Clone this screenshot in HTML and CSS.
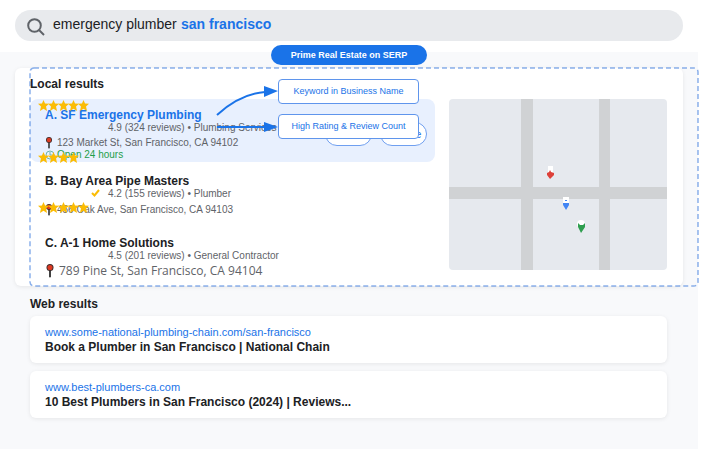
FILE: index.html
```
<!DOCTYPE html>
<html lang="en">
<head>
    <meta charset="UTF-8">
    <meta name="viewport" content="width=device-width, initial-scale=1.0">
    <title>Local search results</title>
    <link rel="stylesheet" href="styles.css">
</head>
<body>
    <svg class="symbols" aria-hidden="true">
        <symbol id="star" viewBox="0 0 10 10">
            <path d="M5 0l1.400 3.200 3.600.3-2.700 2.500.9 3.900L5 7.900 1.800 9.900l.9-3.900L0 3.500l3.600-.3z"/>
        </symbol>
        <symbol id="pushpin" viewBox="0 0 8 12">
            <path d="M3.200 4h1.600v6.500L4 12l-.8-1.500z" fill="#333"/>
            <circle cx="4" cy="3" r="3" fill="#3c2a2a"/>
            <circle cx="4" cy="3" r="2.200" fill="#dd3a22"/>
        </symbol>
    </svg>

    <header class="topbar">
        <form class="searchbar">
            <svg class="search-icon" viewBox="0 0 18 18">
                <circle cx="7.500" cy="7.500" r="6.300"/>
                <path d="M12 12l5 5"/>
            </svg>
            <input class="what" type="text" aria-label="Search" value="emergency plumber">
            <input class="where" type="text" aria-label="City" value="san francisco">
        </form>
    </header>

    <main class="page">
        <div class="prime">
            <span class="prime-badge">Prime Real Estate on SERP</span>
        </div>

        <section class="local">
            <h2>Local results</h2>
            <div class="local-grid">
                <div class="results">
                    <article class="result featured">
                        <h3>A. SF Emergency Plumbing</h3>
                        <p class="meta">4.9 (324 reviews) • Plumbing Services</p>
                        <p class="address"><svg class="pushpin"><use href="#pushpin"/></svg>123 Market St, San Francisco, CA 94102</p>
                        <p class="hours"><svg class="clock" viewBox="0 0 10 10"><circle cx="5" cy="5" r="4"/><path d="M5 2v3h2"/></svg>Open 24 hours</p>
                        <div class="stars">
                            <svg><use href="#star"/></svg><svg><use href="#star"/></svg><svg><use href="#star"/></svg><svg><use href="#star"/></svg><svg><use href="#star"/></svg>
                        </div>
                        <div class="actions">
                            <button type="button">Call</button>
                            <button type="button">Website</button>
                        </div>
                    </article>
                    <article class="result second">
                        <h3>B. Bay Area Pipe Masters</h3>
                        <p class="meta"><svg class="check" viewBox="0 0 9 8"><path d="M1 4l2.500 2.500L8 1"/></svg>4.2 (155 reviews) • Plumber</p>
                        <p class="address"><svg class="pushpin"><use href="#pushpin"/></svg>456 Oak Ave, San Francisco, CA 94103</p>
                        <div class="stars">
                            <svg><use href="#star"/></svg><svg><use href="#star"/></svg><svg><use href="#star"/></svg><svg><use href="#star"/></svg>
                        </div>
                    </article>
                    <article class="result third">
                        <h3>C. A-1 Home Solutions</h3>
                        <p class="meta">4.5 (201 reviews) • General Contractor</p>
                        <p class="address large"><svg class="pushpin"><use href="#pushpin"/></svg>789 Pine St, San Francisco, CA 94104</p>
                        <div class="stars">
                            <svg><use href="#star"/></svg><svg><use href="#star"/></svg><svg><use href="#star"/></svg><svg><use href="#star"/></svg><svg><use href="#star"/></svg>
                        </div>
                    </article>
                </div>
                <svg class="map" viewBox="0 0 218 171" preserveAspectRatio="xMidYMid slice" role="img" aria-label="Map">
                    <rect width="218" height="171" fill="#e6e9ee"/>
                    <path d="M72 0h12v171H72zM150 0h11v171h-11zM0 88h218v12H0z" fill="#d0d2d4"/>
                    <g fill="#fff">
                        <path d="M99 67h5v7h-5z"/>
                        <path d="M114 98h6v7h-6z"/>
                        <circle cx="132" cy="125" r="4"/>
                    </g>
                    <path d="M98 74l2-1 1-2 1 2 3 1v2l-4 4-3-4z" fill="#dd4039"/>
                    <path d="M114 104h6v2l-3 5-3-5zM116 101h2v1h-2z" fill="#4285f4"/>
                    <path d="M129 124l2 2h3l2-2v4l-4 6-3-6z" fill="#2f9e4f"/>
                </svg>
            </div>

            <svg class="zone"><rect x="1" y="1" rx="4"/></svg>
            <svg class="arrows" viewBox="0 0 64 44">
                <path class="line" d="M2 30Q25 9 50 7M2 42H50"/>
                <path class="head" d="M49 1l14 5-14 6zM49 37l14 5-14 5z"/>
            </svg>
            <div class="callouts">
                <span>Keyword in Business Name</span>
                <span>High Rating &amp; Review Count</span>
            </div>
        </section>

        <section class="web">
            <h2>Web results</h2>
            <article class="web-card">
                <a href="#">www.some-national-plumbing-chain.com/san-francisco</a>
                <h3>Book a Plumber in San Francisco | National Chain</h3>
            </article>
            <article class="web-card">
                <a href="#">www.best-plumbers-ca.com</a>
                <h3>10 Best Plumbers in San Francisco (2024) | Reviews...</h3>
            </article>
        </section>
    </main>
</body>
</html>
```
FILE: styles.css
```
* {
    box-sizing: border-box;
}
html {
    height: 100%;
}
body {
    display: flex;
    flex-direction: column;
    min-height: 100%;
    margin: 0;
    padding-right: 18px;
    background-color: #ffffff;
    color: #202124;
    font-family: "Liberation Sans", Arial, sans-serif;
    font-size: 12px;
}
h2, h3, p {
    margin: 0;
}
h2, h3 {
    font-size: 12px;
    line-height: 15px;
}
.symbols {
    position: absolute;
    width: 0;
    height: 0;
}

/* search bar */
.topbar {
    padding: 10px 15px 11px;
}
.searchbar {
    display: flex;
    align-items: center;
    height: 31px;
    padding: 0 12px;
    border-radius: 16px;
    background-color: #e8eaed;
}
.search-icon {
    width: 18px;
    height: 18px;
    margin-top: 2px;
    margin-right: 8px;
    fill: none;
    stroke: #5f6368;
    stroke-width: 2;
}
.searchbar input {
    height: 20px;
    margin-bottom: 4px;
    padding: 0;
    border: none;
    outline: none;
    background: none;
    color: #202124;
    font-family: inherit;
    font-size: 14px;
}
.searchbar .what {
    width: 128px;
}
.searchbar .where {
    flex: 1;
    color: #1a73e8;
    font-weight: bold;
}

.page {
    flex: 1;
    background-color: #f8f9fb;
}
.prime {
    position: relative;
    height: 16px;
}
.prime-badge {
    position: absolute;
    top: -7px;
    left: 50%;
    width: 156px;
    margin-left: -78px;
    border-radius: 10px;
    background-color: #1a73e8;
    color: #ffffff;
    font-size: 9px;
    font-weight: bold;
    line-height: 20px;
    text-align: center;
}

/* local results */
.local {
    position: relative;
    margin: 0 15px;
    padding: 9px 16px 7px 15px;
    border-radius: 6px;
    background-color: #ffffff;
    box-shadow: 0 1px 4px rgba(0, 0, 0, 0.08);
}
.local-grid {
    display: grid;
    grid-template-columns: 13fr 7fr;
    gap: 14px;
    margin-top: 7px;
}
.result {
    position: relative;
    padding: 12px 15px 0;
}
.featured {
    padding-top: 9px;
    padding-bottom: 1px;
    border-radius: 8px;
    background-color: #e8f0fe;
}
.featured h3 {
    color: #1a73e8;
}
.meta {
    position: relative;
    margin-left: 63px;
    color: #5f6368;
    font-size: 10px;
    line-height: 10px;
}
.address, .hours {
    display: flex;
    align-items: center;
    color: #5f6368;
    font-size: 10px;
    line-height: 12px;
}
.address {
    margin-top: 4px;
}
.hours {
    color: #1e9e4a;
}
.second .address {
    margin-top: 5px;
    margin-bottom: 8px;
}
.address.large {
    margin-top: 2px;
    font-family: "Open Sans", sans-serif;
    font-size: 12px;
    line-height: 16px;
}
.pushpin {
    width: 8px;
    height: 12px;
    margin-right: 4px;
}
.large .pushpin {
    width: 10px;
    height: 14px;
}
.clock {
    width: 10px;
    height: 10px;
    margin-right: 2px;
    fill: none;
    stroke: #6fb6b0;
}
.check {
    position: absolute;
    left: -17px;
    width: 9px;
    height: 8px;
    fill: none;
    stroke: #fbbc04;
    stroke-width: 2;
}
.stars {
    position: absolute;
    top: 1px;
    left: 8px;
    display: flex;
    fill: #fbbc04;
}
.second .stars {
    top: -10px;
}
.third .stars {
    top: -22px;
}
.stars svg {
    width: 11px;
    height: 11px;
    margin-right: -1px;
}
.actions {
    position: absolute;
    top: 23px;
    right: 8px;
    display: flex;
    gap: 8px;
}
.actions button {
    width: 47px;
    height: 24px;
    padding: 0;
    border: 1px solid #6f9ff0;
    border-radius: 12px;
    background-color: #ffffff;
    color: #1a73e8;
    font-family: inherit;
    font-size: 10px;
}
.map {
    width: 100%;
    height: 171px;
    border-radius: 4px;
}

/* annotations over the local block */
.zone {
    position: absolute;
    top: -1px;
    left: 14px;
    width: 100%;
    height: calc(100% + 2px);
    overflow: visible;
}
.zone rect {
    width: 100%;
    height: calc(100% - 2px);
    fill: none;
    stroke: #1a63d8;
    stroke-dasharray: 5 3;
    stroke-opacity: 0.5;
    stroke-width: 1.5;
}
.arrows {
    position: absolute;
    top: 17px;
    left: 200px;
    width: 64px;
    height: 44px;
    overflow: visible;
}
.arrows .line {
    fill: none;
    stroke: #1a73e8;
    stroke-width: 2;
}
.arrows .head {
    fill: #1a73e8;
}
.callouts {
    position: absolute;
    top: 11px;
    left: 263px;
    display: grid;
    gap: 10px;
    width: 141px;
}
.callouts span {
    border: 1px solid #5f95ec;
    border-radius: 4px;
    background-color: #ffffff;
    color: #1a73e8;
    font-size: 9px;
    line-height: 23px;
    text-align: center;
}

/* web results */
.web {
    padding: 11px 31px 23px 30px;
}
.web h2 {
    margin-bottom: 4px;
}
.web-card {
    margin-bottom: 8px;
    padding: 8px 15px;
    border-radius: 6px;
    background-color: #ffffff;
    box-shadow: 0 1px 4px rgba(0, 0, 0, 0.08);
}
.web-card a {
    display: block;
    color: #1a73e8;
    font-size: 11px;
    line-height: 16px;
    text-decoration: none;
}
```
